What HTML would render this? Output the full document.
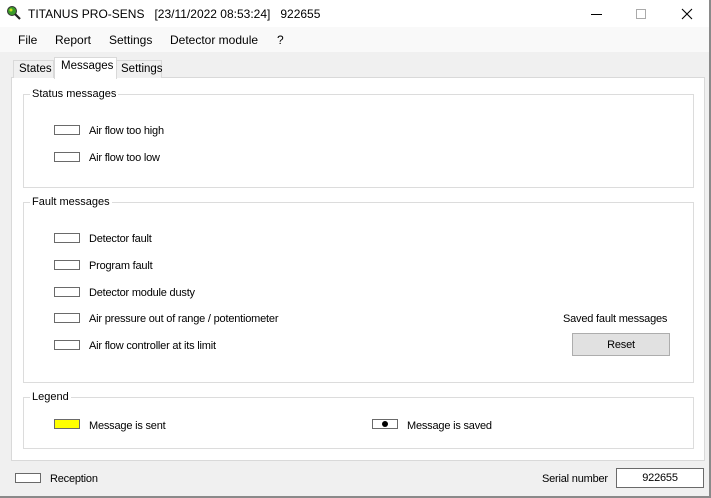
<!DOCTYPE html>
<html><head><meta charset="utf-8"><style>
*{margin:0;padding:0;box-sizing:border-box}
body{width:711px;height:498px;position:relative;background:#f0f0f0;font-family:"Liberation Sans",sans-serif;overflow:hidden;color:#000}
.a{position:absolute;white-space:nowrap}
.t{font-size:12px}
.s{font-size:11px;letter-spacing:-0.2px}
.box{position:absolute;width:26px;height:10px;border:1px solid #6a6a6a;background:#fff}
.grp{position:absolute;border:1px solid #dcdcdc}
.gt{position:absolute;background:#fff;padding:0 2px;font-size:11px;top:-7px;left:6px}
</style></head><body>
<div class="a" style="left:0;top:0;width:711px;height:27px;background:#fff"></div>
<div class="a" style="left:0;top:27px;width:711px;height:25px;background:#f9f9f9"></div>
<svg class="a" style="left:6px;top:5px" width="16" height="16" viewBox="0 0 16 16"><circle cx="6" cy="6" r="4.5" fill="#3a9a2a" stroke="#333"/><circle cx="5" cy="5" r="1.5" fill="#c8e020"/><line x1="9" y1="9" x2="14" y2="14" stroke="#222" stroke-width="2.2"/></svg>
<div class="a t" style="left:28px;top:7px">TITANUS PRO-SENS &nbsp;&nbsp;[23/11/2022 08:53:24] &nbsp;&nbsp;922655</div>
<div class="a" style="left:591px;top:14px;width:11px;height:1px;background:#000"></div>
<div class="a" style="left:636px;top:9px;width:10px;height:10px;border:1px solid #aaa"></div>
<svg class="a" style="left:681px;top:8px" width="12" height="12"><path d="M1 1L11 11M11 1L1 11" stroke="#000" stroke-width="1.1"/></svg>
<div class="a" style="left:709px;top:0;width:2px;height:498px;background:#8a8a8a"></div>
<div class="a" style="left:0;top:496px;width:711px;height:2px;background:#8a8a8a"></div>
<div class="a t" style="left:18px;top:33px">File</div>
<div class="a t" style="left:55px;top:33px">Report</div>
<div class="a t" style="left:109px;top:33px">Settings</div>
<div class="a t" style="left:170px;top:33px">Detector module</div>
<div class="a t" style="left:277px;top:33px">?</div>
<div class="a" style="left:11px;top:77px;width:694px;height:384px;background:#fff;border:1px solid #d9d9d9"></div>
<div class="a" style="left:13px;top:60px;width:41px;height:18px;border:1px solid #d9d9d9;border-bottom:none;background:#f0f0f0"></div>
<div class="a" style="left:19px;top:63px;font-size:11.5px">States</div>
<div class="a" style="left:116px;top:60px;width:46px;height:18px;border:1px solid #d9d9d9;border-bottom:none;background:#f0f0f0"></div>
<div class="a" style="left:121px;top:63px;font-size:11.5px">Settings</div>
<div class="a" style="left:54px;top:57px;width:63px;height:22px;border:1px solid #d9d9d9;border-bottom:none;background:#fff"></div>
<div class="a" style="left:61px;top:60px;font-size:11.5px">Messages</div>

<div class="grp" style="left:23px;top:94px;width:671px;height:94px"><div class="gt">Status messages</div></div>
<div class="box" style="left:54px;top:125px"></div><div class="a s" style="left:89px;top:125px">Air flow too high</div>
<div class="box" style="left:54px;top:152px"></div><div class="a s" style="left:89px;top:152px">Air flow too low</div>

<div class="grp" style="left:23px;top:202px;width:671px;height:181px"><div class="gt">Fault messages</div></div>
<div class="box" style="left:54px;top:233px"></div><div class="a s" style="left:89px;top:233px">Detector fault</div>
<div class="box" style="left:54px;top:260px"></div><div class="a s" style="left:89px;top:260px">Program fault</div>
<div class="box" style="left:54px;top:287px"></div><div class="a s" style="left:89px;top:287px">Detector module dusty</div>
<div class="box" style="left:54px;top:313px"></div><div class="a s" style="left:89px;top:313px">Air pressure out of range / potentiometer</div>
<div class="box" style="left:54px;top:340px"></div><div class="a s" style="left:89px;top:340px">Air flow controller at its limit</div>
<div class="a s" style="left:563px;top:313px">Saved fault messages</div>
<div class="a s" style="left:572px;top:333px;width:98px;height:23px;background:#e1e1e1;border:1px solid #adadad;text-align:center;line-height:22px">Reset</div>

<div class="grp" style="left:23px;top:397px;width:671px;height:52px"><div class="gt">Legend</div></div>
<div class="box" style="left:54px;top:419px;background:#ffff00"></div><div class="a s" style="left:89px;top:420px">Message is sent</div>
<div class="box" style="left:372px;top:419px"><div style="position:absolute;left:9px;top:1px;width:6px;height:6px;border-radius:50%;background:#000"></div></div><div class="a s" style="left:407px;top:420px">Message is saved</div>

<div class="box" style="left:15px;top:473px"></div><div class="a s" style="left:50px;top:473px">Reception</div>
<div class="a s" style="left:542px;top:473px">Serial number</div>
<div class="a s" style="left:616px;top:468px;width:88px;height:20px;border:1px solid #6a6a6a;background:#fff;text-align:center;line-height:19px">922655</div>
</body></html>
